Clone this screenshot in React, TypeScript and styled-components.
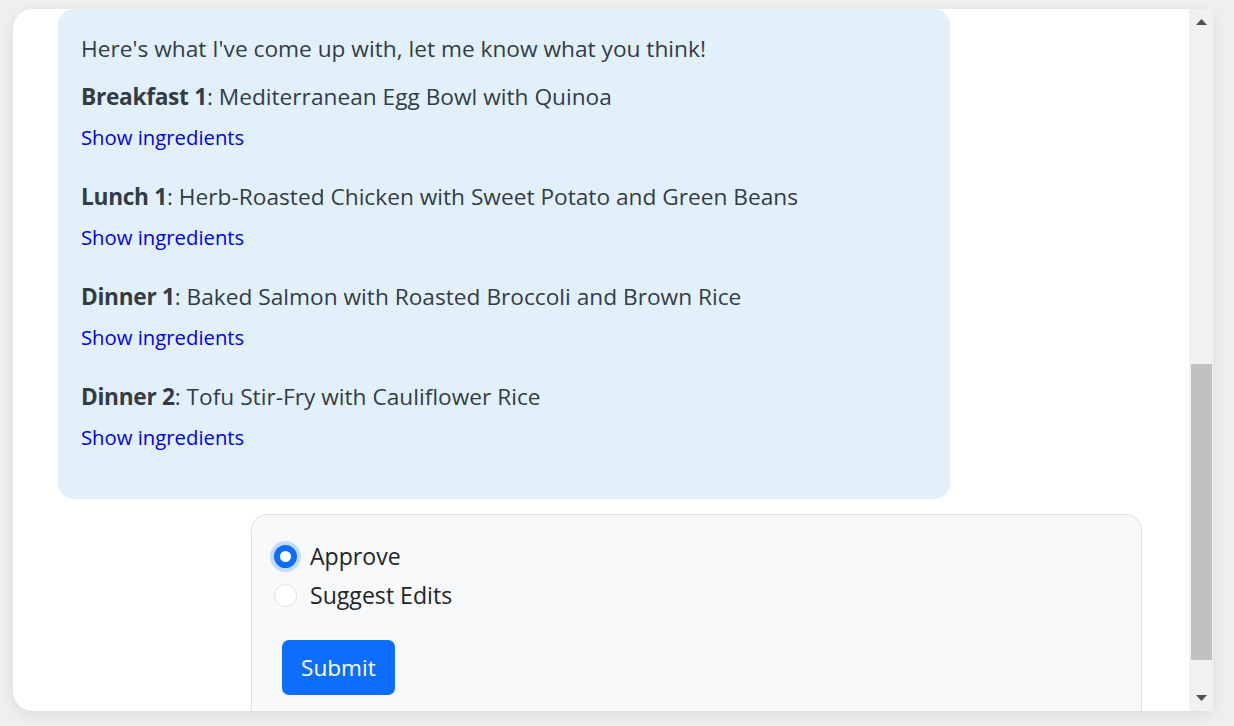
import styled, { createGlobalStyle } from 'styled-components'

const GlobalStyle = createGlobalStyle`
  html, body {
    margin: 0;
    background: #f0f0f0;
  }
  body {
    font-family: 'Open Sans', 'Noto Sans', sans-serif;
  }
`

const Page = styled.div`
  padding: 9px 21px 15px 13px;
  height: 726px;
  box-sizing: border-box;
`

const Card = styled.div`
  display: flex;
  height: 702px;
  width: 1200px;
  background: #fff;
  border-radius: 20px 0 0 20px;
  overflow: hidden;
  box-shadow: 0 4px 18px rgba(0, 0, 0, 0.09);
`

const Content = styled.div`
  flex: 1;
  overflow: hidden;
  padding: 0 46px 0 45px;
  display: flex;
  flex-direction: column;
`

const Bubble = styled.div`
  width: 892px;
  box-sizing: border-box;
  background: #e2f0fc;
  border-radius: 16px;
  padding: 23px 23px 45px;
  color: #333c45;
  font-size: 22.7px;
  line-height: 33px;
`

const Intro = styled.p`
  margin: 0 0 15px;
`

const Meals = styled.div`
  display: flex;
  flex-direction: column;
  gap: 26px;
`

const Meal = styled.div`
  display: flex;
  flex-direction: column;
  gap: 8px;
`

const MealTitle = styled.div`
  white-space: nowrap;
  b {
    font-weight: 700;
    letter-spacing: -0.3px;
  }
`

const IngredientsLink = styled.a`
  color: #0000ee;
  font-size: 20.3px;
  text-decoration: none;
  cursor: pointer;
`

const FormBox = styled.form`
  margin: 15px 0 0 193px;
  width: 891px;
  box-sizing: border-box;
  flex-shrink: 0;
  height: 260px;
  background: #f8f9fa;
  border: 1px solid #dee2e6;
  border-radius: 16px;
  padding: 22px 22px;
  color: #212529;
  font-size: 23.1px;
  line-height: 39px;
`

const RadioRow = styled.label`
  display: flex;
  align-items: center;
  gap: 13px;
  cursor: pointer;
`

const RadioDot = styled.span<{ $checked?: boolean }>`
  width: 23px;
  height: 23px;
  border-radius: 50%;
  box-sizing: border-box;
  flex-shrink: 0;
  background: #fff;
  border: ${(p) => (p.$checked ? '6.5px solid #0d6efd' : '1px solid #dee2e6')};
  box-shadow: ${(p) => (p.$checked ? '0 0 0 4px #c2dbfe' : 'none')};
`

const SubmitButton = styled.button`
  margin: 25px 0 0 8px;
  height: 55px;
  padding: 0 19px;
  border: none;
  border-radius: 7px;
  background: #0d6efd;
  color: #fff;
  font-family: inherit;
  font-size: 22.6px;
  cursor: pointer;
`

const Scrollbar = styled.div`
  width: 24px;
  flex-shrink: 0;
  background: #f1f1f1;
  display: flex;
  flex-direction: column;
`

const ScrollButton = styled.div`
  height: 26px;
  display: flex;
  align-items: center;
  justify-content: center;
  color: #505050;
`

const Track = styled.div`
  flex: 1;
`

const Thumb = styled.div<{ $top: number; $height: number }>`
  margin: ${(p) => p.$top}px 1px 0 2px;
  height: ${(p) => p.$height}px;
  background: #c1c1c1;
`

const meals = [
  { label: 'Breakfast 1', name: 'Mediterranean Egg Bowl with Quinoa' },
  { label: 'Lunch 1', name: 'Herb-Roasted Chicken with Sweet Potato and Green Beans' },
  { label: 'Dinner 1', name: 'Baked Salmon with Roasted Broccoli and Brown Rice' },
  { label: 'Dinner 2', name: 'Tofu Stir-Fry with Cauliflower Rice' },
]

export default function App() {
  return (
    <>
      <GlobalStyle />
      <Page>
        <Card>
          <Content>
            <Bubble>
              <Intro>Here's what I've come up with, let me know what you think!</Intro>
              <Meals>
                {meals.map((m) => (
                  <Meal key={m.label}>
                    <MealTitle>
                      <b>{m.label}</b>: {m.name}
                    </MealTitle>
                    <IngredientsLink>Show ingredients</IngredientsLink>
                  </Meal>
                ))}
              </Meals>
            </Bubble>
            <FormBox onSubmit={(e) => e.preventDefault()}>
              <RadioRow>
                <RadioDot $checked />
                Approve
              </RadioRow>
              <RadioRow>
                <RadioDot />
                Suggest Edits
              </RadioRow>
              <SubmitButton type="submit">Submit</SubmitButton>
            </FormBox>
          </Content>
          <Scrollbar>
            <ScrollButton>
              <svg width="11" height="6" viewBox="0 0 11 6">
                <polygon points="0,6 11,6 5.5,0" fill="currentColor" />
              </svg>
            </ScrollButton>
            <Track>
              <Thumb $top={329} $height={296} />
            </Track>
            <ScrollButton>
              <svg width="11" height="6" viewBox="0 0 11 6">
                <polygon points="0,0 11,0 5.5,6" fill="currentColor" />
              </svg>
            </ScrollButton>
          </Scrollbar>
        </Card>
      </Page>
    </>
  )
}
